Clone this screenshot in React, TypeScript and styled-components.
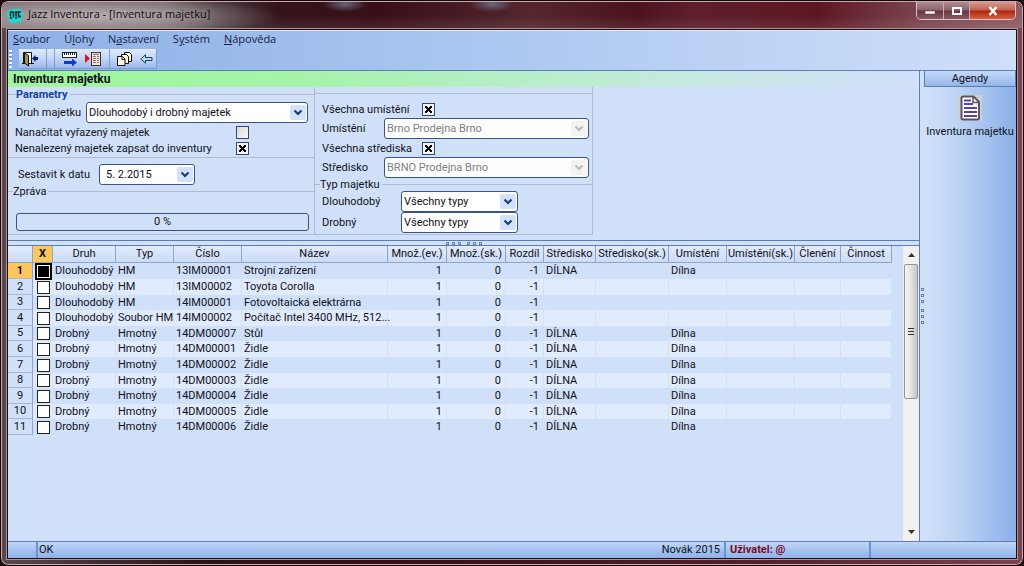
import React from "react";
import styled, { createGlobalStyle, css } from "styled-components";

const ui = `Roboto, "Liberation Sans", Arial, sans-serif`;
const segoe = `"Open Sans", "Noto Sans", sans-serif`;
const line = "#5a7fb0";
const rule = "#aebccf";
const panel = "#d0e0f9";

const Global = createGlobalStyle`
  * { box-sizing: border-box; }
  body { margin: 0; background: #1c0508; color: #101018; font: 11px/13px ${ui}; }
  button, input, select { font: inherit; color: inherit; margin: 0; }
`;

const Window = styled.div`
  min-height: 100vh;
  display: flex;
  flex-direction: column;
  padding: 0 5px 5px;
  border: 1px solid #14060a;
  border-radius: 8px;
  box-shadow: inset 0 0 0 1px #c9a9b0;
  background: linear-gradient(90deg, #57494c 0, #2b1216 20%, #3a1218 45%, #55212a 75%, #7a4450 100%);
`;

const TitleBar = styled.header`
  display: flex;
  align-items: center;
  gap: 4px;
  height: 26px;
  margin: 1px -4px 0;
  padding: 0 6px 0 5px;
  border-radius: 6px 6px 0 0;
  background:
    radial-gradient(ellipse 22px 8px at 343px 2px, rgba(110, 125, 150, 0.8), transparent 100%),
    radial-gradient(ellipse 22px 8px at 490px 2px, rgba(110, 125, 150, 0.8), transparent 100%),
    radial-gradient(ellipse 190px 20px at 90px 14px, rgba(200, 190, 192, 0.8), rgba(150, 140, 142, 0) 100%),
    linear-gradient(180deg, rgba(255, 255, 255, 0) 50%, rgba(255, 255, 255, 0.08) 100%),
    linear-gradient(90deg, #776c6f 0, #6e6365 16%, #4a3a3e 21%, #35131a 27%, #3a0f18 37%, #54262e 52%, #4b131e 62%, #5e1f2a 68%, #5c1822 80%, #7b4550 90%, #8d5c66 100%);
`;

const Title = styled.h1`
  margin: 0;
  padding-bottom: 2px;
  flex: 1;
  font: 400 11px/16px ${segoe};
  color: #0c0a0e;
  text-shadow: 0 0 6px rgba(225, 215, 217, 0.7);
`;

const Captions = styled.div`
  display: flex;
  align-self: flex-start;
  border: 1px solid #d9c3c8;
  border-top: 0;
  border-radius: 0 0 5px 5px;
  overflow: hidden;
`;

const Caption = styled.button<{ $close?: boolean }>`
  width: ${(p) => (p.$close ? 46 : 26)}px;
  height: 17px;
  padding: 0;
  border: 0;
  border-left: 1px solid #c9aab0;
  display: flex;
  align-items: center;
  justify-content: center;
  background: ${(p) =>
    p.$close
      ? "linear-gradient(180deg, #d59a90 0, #c4604f 48%, #ab2610 52%, #d8603c 100%)"
      : "linear-gradient(180deg, #b08d94 0, #8c626b 48%, #673540 52%, #8a5b65 100%)"};
  &:first-child { border-left: 0; }
`;

const Client = styled.div`
  flex: 1;
  display: flex;
  flex-direction: column;
  border: 1px solid #1b1014;
  outline: 1px solid #b08f98;
  outline-offset: 0;
  margin: 1px 1px 1px;
  background: ${panel};
`;

const TopBars = styled.div`
  background: linear-gradient(90deg, #8db0e8 0, #a3c1ee 35%, #cfdffa 100%);
  border-top: 1px solid #dfe9fb;
  border-bottom: 1px solid ${line};
`;

const Menu = styled.nav`
  display: flex;
  gap: 14px;
  height: 18px;
  padding: 0 5px;
  a {
    font: 11px/16px ${segoe};
    color: #15233e;
    text-decoration: none;
  }
`;

const Toolbar = styled.div`
  display: flex;
  align-items: stretch;
  gap: 7px;
  height: 21px;
  padding: 0 0 1px 1px;
`;

const Grip = styled.span`
  width: 3px;
  margin: 1px 0;
  background: repeating-linear-gradient(180deg, #f2f7ff 0 2px, #7895cc 2px 3px, transparent 3px 4px);
`;

const ToolGroup = styled.div`
  display: flex;
  align-items: center;
  gap: 7px;
  padding: 0 3px;
  border-right: 1px solid #7c9cd2;
  border-bottom: 1px solid #7c9cd2;
  background: linear-gradient(180deg, #dfeafc 0, #c3d6f6 50%, #9bb8ea 100%);
`;

const Tool = styled.button`
  padding: 0;
  border: 0;
  background: none;
  display: flex;
`;

const ToolSep = styled.span`
  width: 1px;
  align-self: stretch;
  background: #7d9dd0;
`;

const Body = styled.div`
  flex: 1;
  display: flex;
`;

const Main = styled.main`
  flex: 1;
  min-width: 0;
  display: flex;
  flex-direction: column;
  border-right: 1px solid ${line};
`;

const Heading = styled.h2`
  margin: 0;
  height: 16px;
  padding-left: 5px;
  font: 700 12px/16px ${ui};
  background: linear-gradient(90deg, #9df79d 0, #a6f3a8 32%, #b6efc8 55%, #c9e7e6 80%, ${panel} 100%);
`;

const Params = styled.form`
  display: grid;
  grid-template-columns: 307px 278px;
  height: 154px;
  border-bottom: 1px solid ${line};
`;

const Column = styled.div<{ $top: number }>`
  display: flex;
  flex-direction: column;
  height: 148px;
  padding-top: ${(p) => p.$top}px;
  border-right: 1px solid ${rule};
  border-bottom: 1px solid ${rule};
`;

const Group = styled.fieldset<{ $pad?: string }>`
  margin: 0;
  min-width: 0;
  padding: ${(p) => p.$pad ?? "0"};
  border: 0;
  border-top: 1px solid ${rule};
`;

const Legend = styled.legend<{ $strong?: boolean }>`
  margin-left: 5px;
  padding: 0 2px 0 0;
  line-height: 13px;
  ${(p) =>
    p.$strong &&
    css`
      margin-left: 8px;
      font-weight: 700;
      color: #1540a0;
    `}
`;

const Row = styled.div<{ $label: number; $h?: number; $indent?: number }>`
  display: grid;
  grid-template-columns: ${(p) => p.$label}px 1fr;
  align-items: center;
  height: ${(p) => p.$h ?? 21}px;
  padding-left: ${(p) => p.$indent ?? 7}px;
`;

const Check = styled.input.attrs({ type: "checkbox" })`
  appearance: none;
  width: 13px;
  height: 13px;
  border: 1px solid #33486e;
  background: linear-gradient(135deg, #d8d8d4, #f8f8f6);
  &:checked {
    background:
      linear-gradient(45deg, transparent 38%, #000 38% 62%, transparent 62%) center / 7px 7px no-repeat,
      linear-gradient(-45deg, transparent 38%, #000 38% 62%, transparent 62%) center / 7px 7px no-repeat,
      #f4f4f2;
  }
`;

const Combo = styled.span<{ $w: number; $pad: number }>`
  position: relative;
  display: block;
  width: ${(p) => p.$w}px;
  height: 21px;
  select {
    appearance: none;
    width: 100%;
    height: 21px;
    padding: 0 20px 0 ${(p) => p.$pad}px;
    border: 1px solid #39557f;
    border-radius: 3px;
    background: #fff;
    color: #101018;
    opacity: 1;
  }
  select:disabled { color: #808080; background: #fdfdfd; }
  svg {
    position: absolute;
    right: 2px;
    top: 3px;
    pointer-events: none;
  }
`;

const Progress = styled.div`
  height: 18px;
  margin: 15px 5px 0 8px;
  border: 1px solid #39557f;
  border-radius: 3px;
  text-align: center;
  line-height: 16px;
`;

const Splitter = styled.div<{ $vertical?: boolean }>`
  display: flex;
  align-items: center;
  justify-content: center;
  gap: 3px;
  flex: none;
  ${(p) =>
    p.$vertical
      ? css`
          flex-direction: column;
          width: 4px;
        `
      : css`
          height: 5px;
          border-bottom: 1px solid ${line};
        `}
  i {
    width: 3px;
    height: 3px;
    border: 1px solid #5b83c4;
    background: #e8f1ff;
  }
  i:nth-child(4) { margin: ${(p) => (p.$vertical ? "3px 0 0" : "0 0 0 3px")}; }
`;

const GridArea = styled.div`
  flex: 1;
  display: flex;
  justify-content: space-between;
  min-height: 294px;
`;

const Grid = styled.table`
  table-layout: fixed;
  width: 884px;
  align-self: flex-start;
  border-collapse: separate;
  border-spacing: 0;
  th, td {
    padding: 0 2px;
    white-space: nowrap;
    line-height: 14px;
  }
  thead th {
    height: 17px;
    padding: 0;
    font-weight: 400;
    border-right: 1px solid #8ea5c8;
    border-bottom: 1px solid #8ea5c8;
    background: linear-gradient(180deg, #e0eafb, #cbdcf6);
  }
  thead th:nth-child(2) { background: #ffc65c; font-weight: 700; }
  tbody th {
    font-weight: 400;
    border-right: 1px solid #8ea5c8;
    border-bottom: 1px solid #a5bad8;
  }
  tbody tr { height: 16px; }
  tbody tr:nth-child(5n + 3), tbody tr:nth-child(5n) { height: 15px; }
  tbody td { border-right: 1px solid transparent; }
  tbody tr:nth-child(even) td { background: #e0ebfe; border-right-color: #d2e0f8; }
  tbody tr:first-child th { background: #ffc65c; font-weight: 700; }
  tbody tr td:nth-child(2) { padding: 0 0 0 4px; }
  tbody tr td:nth-child(n + 7):nth-child(-n + 9) { text-align: right; padding-right: 4px; }
`;

const Mark = styled.input.attrs({ type: "checkbox" })<{ $current?: boolean }>`
  appearance: none;
  display: block;
  width: 13px;
  height: 13px;
  border: 1px solid #222;
  background: #fff;
  ${(p) =>
    p.$current &&
    css`
      background: #000;
      border: 1px solid #fff;
      outline: 2px solid #000;
    `}
`;

const Scroll = styled.div`
  display: flex;
  flex-direction: column;
  width: 16px;
  background: #f1f1f1;
`;

const ScrollEnd = styled.button`
  height: 18px;
  padding: 0;
  border: 0;
  background: none;
  display: flex;
  align-items: center;
  justify-content: center;
`;

const Track = styled.div`
  flex: 1;
`;

const Thumb = styled.div`
  height: 135px;
  margin: 0 1px;
  border: 1px solid #8f949c;
  border-radius: 2px;
  background: linear-gradient(90deg, #f6f6f6 0, #e4e4e6 45%, #c4c6ca 100%);
  display: flex;
  flex-direction: column;
  align-items: center;
  justify-content: center;
  gap: 2px;
  i { width: 6px; height: 1px; background: #333; }
`;

const Agenda = styled.aside`
  width: 92px;
  flex: none;
  background: linear-gradient(90deg, #d0e0f9 0, #c2d7f6 30%, #8bb0e8 100%);
  text-align: center;
  h2 {
    margin: 0;
    height: 16px;
    border: 1px solid ${line};
    border-top: 0;
    font: 11px/15px ${ui};
    background: linear-gradient(180deg, #c6d9f8, #94b6ec);
  }
  a {
    display: flex;
    flex-direction: column;
    align-items: center;
    gap: 4px;
    padding-top: 8px;
    color: #101018;
    text-decoration: none;
    white-space: nowrap;
  }
`;

const Status = styled.footer`
  display: grid;
  grid-template-columns: 28px 1fr 145px 147px;
  height: 17px;
  border-top: 1px solid ${line};
  background: linear-gradient(180deg, #c2d6f7 0, #a9c5f1 45%, #8fb2ea 100%);
  line-height: 16px;
  > * { border-left: 2px solid #6a92cf; padding: 0 4px 0 1px; }
  > *:first-child { border-left: 0; }
  strong { padding-left: 4px; color: #7a0a1e; }
`;

const Spread = styled.span`
  display: flex;
  justify-content: space-between;
`;

function Arrow({ off }: { off?: boolean }) {
  return (
    <svg width="16" height="15" viewBox="0 0 16 15" aria-hidden="true">
      <rect width="16" height="15" rx="2" fill={off ? "#f3f3f0" : "#d3e2fb"} />
      <path d="M4.5 5.5 8 9l3.5-3.5" fill="none" stroke={off ? "#bdbdb6" : "#1d3f78"} strokeWidth="2.2" />
    </svg>
  );
}

type SelectProps = { id: string; w: number; value: string; off?: boolean; pad?: number };

function Select({ id, w, value, off, pad = 2 }: SelectProps) {
  return (
    <Combo $w={w} $pad={pad}>
      <select id={id} disabled={off} defaultValue={value}>
        <option>{value}</option>
      </select>
      <Arrow off={off} />
    </Combo>
  );
}

const Logo = () => (
  <svg width="17" height="17" viewBox="0 0 17 16" aria-hidden="true">
    <path d="M0 4 3 1.500l1 1.500 3-2 2 1 4-1 1 2 2.500 2-1.500 3 1 3-2 1 .5 3-3.500-.5-2 1.500-2-1-3 1-.5-2.500-2 0 .5-3-1-2z" fill="#1fd9d2" />
    <path d="M3.500 4v5M6.500 4v6M9 4v5M11.500 4v6M3 4.500h3M8 4.500h6M3 10l2 1M8 10.500h2M13 8v2" stroke="#08282c" strokeWidth="1.500" />
  </svg>
);

const Door = () => (
  <svg width="17" height="16" viewBox="0 0 17 16" aria-hidden="true">
    <path d="M1.500 12.500v-11h8v11" fill="#fff" stroke="#111" />
    <path d="M0 12.500h3M7 12.500h5" stroke="#111" />
    <path d="M2.500 2 6.500 4.500v10.500L2.500 12z" fill="#a09a3c" stroke="#111" />
    <path d="M10 7.500 13.500 4v2H16v3h-2.500v2z" fill="#10207c" />
  </svg>
);

const RulerArrow = () => (
  <svg width="16" height="16" viewBox="0 0 16 16" aria-hidden="true">
    <rect x=".5" y="1.500" width="14" height="5" fill="#fff" stroke="#222" />
    <path d="M2.500 2v2M4.500 2v2M6.500 2v2M8.500 2v2M10.500 2v2M12.500 2v2" stroke="#222" />
    <path d="M2 10h8V7.500l5 4-5 4V13H2z" fill="#1436d6" />
  </svg>
);

const RedList = () => (
  <svg width="17" height="16" viewBox="0 0 17 16" aria-hidden="true">
    <path d="M0 3l5 4.500L0 12z" fill="#e0101c" />
    <rect x="6.500" y="1.500" width="9" height="13" fill="#f2e2de" stroke="#333" />
    <path d="M8 3.500h6M8 5.500h3M12 5.500h2M8 7.500h3M12 7.500h2M8 9.500h3M12 9.500h2M8 11.500h3M12 11.500h2" stroke="#a06a64" />
  </svg>
);

const Pages = () => (
  <svg width="16" height="16" viewBox="0 0 16 16" aria-hidden="true">
    <g fill="#fffbe6" stroke="#111">
      <path d="M7.500 1.500h5l2 2v7h-7z" />
      <path d="M4.500 3.500h5l2 2v7h-7z" />
      <path d="M.5 5.500h5l2.500 2.500v6.500H.5z" />
      <path d="M5 5.500v3h3" fill="none" />
    </g>
  </svg>
);

const Back = () => (
  <svg width="13" height="12" viewBox="0 0 13 12" aria-hidden="true">
    <path d="M.8 6 5.500 1.800V4.500h6.500v3H5.500v2.700z" fill="#b9dcec" stroke="#1c3f58" />
  </svg>
);

const Doc = () => (
  <svg width="24" height="26" viewBox="0 0 24 26" aria-hidden="true">
    <rect width="24" height="26" fill="#cfcfd6" />
    <path d="M3.500 3q0-1.500 1.500-1.500h10.500L21 7v16q0 1.500-1.500 1.500H5q-1.500 0-1.500-1.500z" fill="#fff" stroke="#5c545e" strokeWidth="2" />
    <path d="M15 2v5.500h5.500" fill="none" stroke="#5c545e" strokeWidth="1.500" />
    <path d="M6 5.500h7M6 9h9M6 13h13M6 17h13M6 21h13" stroke="#5540b8" strokeWidth="1.800" />
  </svg>
);

const columns: [string, number][] = [
  ["", 25], ["X", 20], ["Druh", 63], ["Typ", 58], ["Číslo", 68], ["Název", 146],
  ["Množ.(ev.)", 59], ["Množ.(sk.)", 59], ["Rozdíl", 38], ["Středisko", 52], ["Středisko(sk.)", 73],
  ["Umístění", 58], ["Umístění(sk.)", 68], ["Členění", 46], ["Činnost", 51],
];

const rows: [string, string, string, string, boolean][] = [
  ["Dlouhodobý", "HM", "13IM00001", "Strojní zařízení", true],
  ["Dlouhodobý", "HM", "13IM00002", "Toyota Corolla", false],
  ["Dlouhodobý", "HM", "14IM00001", "Fotovoltaická elektrárna", false],
  ["Dlouhodobý", "Soubor HM", "14IM00002", "Počítač Intel 3400 MHz, 512...", false],
  ["Drobný", "Hmotný", "14DM00007", "Stůl", true],
  ["Drobný", "Hmotný", "14DM00001", "Židle", true],
  ["Drobný", "Hmotný", "14DM00002", "Židle", true],
  ["Drobný", "Hmotný", "14DM00003", "Židle", true],
  ["Drobný", "Hmotný", "14DM00004", "Židle", true],
  ["Drobný", "Hmotný", "14DM00005", "Židle", true],
  ["Drobný", "Hmotný", "14DM00006", "Židle", true],
];

const Dots = () => (
  <>
    {[0, 1, 2, 3, 4, 5].map((n) => (
      <i key={n} />
    ))}
  </>
);

export default function App() {
  return (
    <>
      <Global />
      <Window>
        <TitleBar>
          <Logo />
          <Title>Jazz Inventura - [Inventura majetku]</Title>
          <Captions>
            <Caption aria-label="Minimalizovat">
              <svg width="12" height="10"><rect x="1" y="5" width="10" height="3" fill="#fff" stroke="#5a3a42" strokeWidth=".5" /></svg>
            </Caption>
            <Caption aria-label="Maximalizovat">
              <svg width="12" height="10"><rect x="2" y="2" width="8" height="6" fill="none" stroke="#fff" strokeWidth="2" /></svg>
            </Caption>
            <Caption $close aria-label="Zavřít">
              <svg width="12" height="10"><path d="M2.500 1l7 8M9.500 1l-7 8" stroke="#fff" strokeWidth="2.500" /></svg>
            </Caption>
          </Captions>
        </TitleBar>
        <Client>
          <TopBars>
            <Menu>
              <a href="#soubor"><u>S</u>oubor</a>
              <a href="#ulohy">Ú<u>l</u>ohy</a>
              <a href="#nastaveni">N<u>a</u>stavení</a>
              <a href="#system">S<u>y</u>stém</a>
              <a href="#napoveda"><u>N</u>ápověda</a>
            </Menu>
            <Toolbar>
              <Grip />
              <ToolGroup>
                <Tool aria-label="Konec"><Door /></Tool>
                <ToolSep />
                <ToolSep />
                <Tool aria-label="Načíst"><RulerArrow /></Tool>
                <Tool aria-label="Sestavit"><RedList /></Tool>
                <ToolSep />
                <Tool aria-label="Kopírovat"><Pages /></Tool>
                <Tool aria-label="Zpět"><Back /></Tool>
              </ToolGroup>
            </Toolbar>
          </TopBars>
          <Body>
            <Main>
              <Heading>Inventura majetku</Heading>
              <Params>
                <Column $top={1}>
                  <Group $pad="1px 0 2px">
                    <Legend $strong>Parametry</Legend>
                    <Row $label={70} $indent={8}>
                      <label htmlFor="druh">Druh majetku</label>
                      <Select id="druh" w={222} value="Dlouhodobý i drobný majetek" />
                    </Row>
                    <Row $label={221} $h={18}>
                      <label htmlFor="vyrazeny">Nanačítat vyřazený majetek</label>
                      <Check id="vyrazeny" />
                    </Row>
                    <Row $label={221} $h={14}>
                      <label htmlFor="nenalezeny">Nenalezený majetek zapsat do inventury</label>
                      <Check id="nenalezeny" defaultChecked />
                    </Row>
                  </Group>
                  <Group $pad="6px 0 0">
                    <Row $label={81} $indent={10}>
                      <label htmlFor="datum">Sestavit k datu</label>
                      <Select id="datum" w={96} value="5. 2.2015" pad={6} />
                    </Row>
                  </Group>
                  <Group>
                    <Legend>Zpráva</Legend>
                    <Progress role="progressbar" aria-valuenow={0}>0 %</Progress>
                  </Group>
                </Column>
                <Column $top={6}>
                  <Group $pad="6px 0 0">
                    <Row $label={100} $h={18}>
                      <label htmlFor="vsum">Všechna umístění</label>
                      <Check id="vsum" defaultChecked />
                    </Row>
                    <Row $label={62}>
                      <label htmlFor="umisteni">Umístění</label>
                      <Select id="umisteni" w={205} value="Brno Prodejna Brno" off />
                    </Row>
                    <Row $label={100} $h={18}>
                      <label htmlFor="vsst">Všechna střediska</label>
                      <Check id="vsst" defaultChecked />
                    </Row>
                    <Row $label={62}>
                      <label htmlFor="stredisko">Středisko</label>
                      <Select id="stredisko" w={205} value="BRNO Prodejna Brno" off />
                    </Row>
                  </Group>
                  <Group>
                    <Legend>Typ majetku</Legend>
                    <Row $label={79}>
                      <label htmlFor="dlouhodoby">Dlouhodobý</label>
                      <Select id="dlouhodoby" w={117} value="Všechny typy" />
                    </Row>
                    <Row $label={79}>
                      <label htmlFor="drobny">Drobný</label>
                      <Select id="drobny" w={117} value="Všechny typy" />
                    </Row>
                  </Group>
                </Column>
              </Params>
              <Splitter><Dots /></Splitter>
              <GridArea>
                <Grid>
                  <colgroup>
                    {columns.map(([name, w]) => <col key={name} width={w} />)}
                  </colgroup>
                  <thead>
                    <tr>{columns.map(([name]) => <th key={name} scope="col">{name}</th>)}</tr>
                  </thead>
                  <tbody>
                    {rows.map(([druh, typ, cislo, nazev, dilna], i) => (
                      <tr key={cislo}>
                        <th scope="row">{i + 1}</th>
                        <td><Mark aria-label={nazev} $current={i === 0} /></td>
                        <td>{druh}</td>
                        <td>{typ}</td>
                        <td>{cislo}</td>
                        <td>{nazev}</td>
                        <td>1</td>
                        <td>0</td>
                        <td>-1</td>
                        <td>{dilna && "DÍLNA"}</td>
                        <td />
                        <td>{dilna && "Dílna"}</td>
                        <td />
                        <td />
                        <td />
                      </tr>
                    ))}
                  </tbody>
                </Grid>
                <Scroll>
                  <ScrollEnd aria-label="Nahoru"><svg width="7" height="4"><path d="M0 4 3.500 0 7 4z" fill="#333" /></svg></ScrollEnd>
                  <Track>
                    <Thumb><i /><i /><i /></Thumb>
                  </Track>
                  <ScrollEnd aria-label="Dolů"><svg width="7" height="4"><path d="M0 0h7L3.500 4z" fill="#333" /></svg></ScrollEnd>
                </Scroll>
              </GridArea>
            </Main>
            <Splitter $vertical><Dots /></Splitter>
            <Agenda>
              <h2>Agendy</h2>
              <a href="#inventura"><Doc />Inventura majetku</a>
            </Agenda>
          </Body>
          <Status>
            <span />
            <Spread><span>OK</span><span>Novák 2015</span></Spread>
            <strong>Uživatel: @</strong>
            <span />
          </Status>
        </Client>
      </Window>
    </>
  );
}
